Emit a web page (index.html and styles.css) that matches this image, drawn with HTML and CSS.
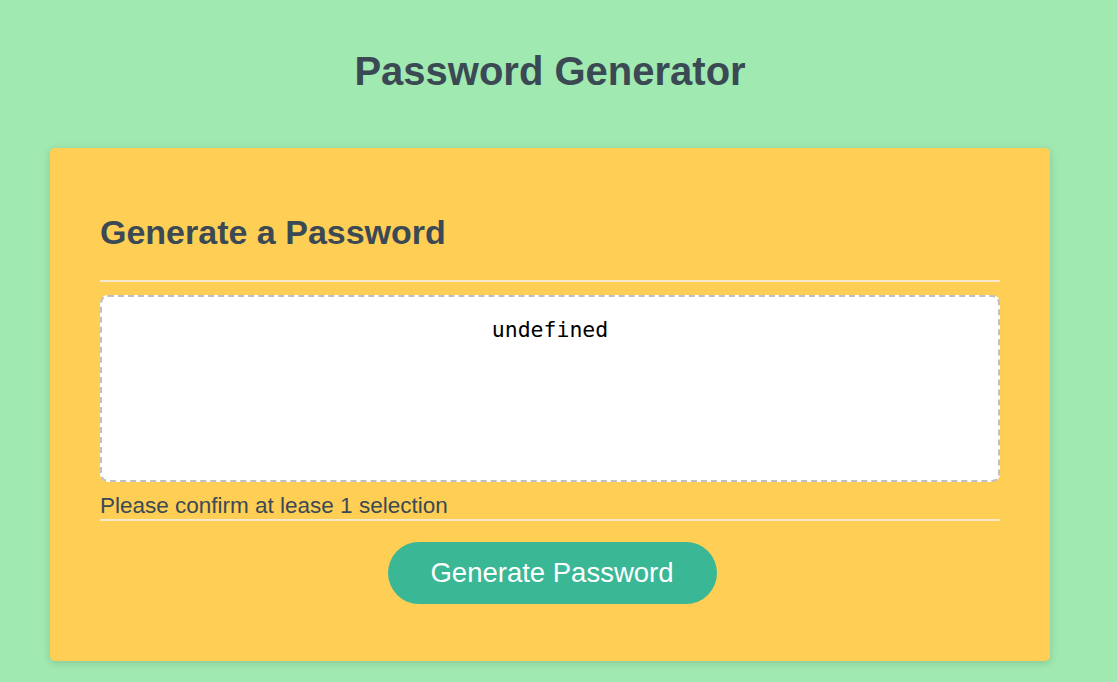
FILE: index.html
```html
<!DOCTYPE html>
<html lang="en">
<head>
<meta charset="utf-8">
<title>Password Generator</title>
<link rel="stylesheet" href="styles.css">
</head>
<body>
<div class="wrapper">
  <header>
    <h1>Password Generator</h1>
  </header>
  <div class="card">
    <div class="card-header">
      <h2>Generate a Password</h2>
    </div>
    <div class="card-body">
      <textarea readonly id="password" class="password" aria-label="Generated Password">undefined</textarea>
      <p class="hint">Please confirm at lease 1 selection</p>
    </div>
    <div class="card-footer">
      <button id="generate" class="btn">Generate Password</button>
    </div>
  </div>
</div>
</body>
</html>
```

FILE: styles.css
```css
* { box-sizing: border-box; }
html, body { margin: 0; padding: 0; }
body {
  font-family: "Liberation Sans", Arial, sans-serif;
  background-color: #a0e9b0;
  height: 682px;
  overflow: hidden;
}
.wrapper {
  width: 1100px;
  padding: 50px 50px 0 50px;
}
header {
  text-align: center;
  color: #3b4954;
}
h1 {
  margin: 0 0 55px 0;
  font-size: 40px;
  line-height: 43px;
  font-weight: bold;
}
.card {
  background-color: #ffcf55;
  border-radius: 5px;
  box-shadow: rgba(0, 0, 0, 0.15) 0 2px 8px 0;
  color: #3b4954;
  padding: 65px 50px 57px 50px;
  height: 513px;
}
.card-header::after {
  content: "";
  display: block;
  height: 2px;
  background: #f6e8cb;
}
h2 {
  margin: 0 0 29px 0;
  font-size: 34px;
  line-height: 38px;
  font-weight: bold;
}
.card-body {
  padding-top: 13px;
}
.password {
  display: block;
  width: 100%;
  height: 187px;
  margin: 0;
  padding: 20px 14px;
  border: 2px dashed #c0c0c0;
  border-radius: 8px;
  background: #fff;
  resize: none;
  overflow: hidden;
  text-align: center;
  font-family: "DejaVu Sans Mono", monospace;
  font-size: 21.5px;
  line-height: 26px;
  color: #000;
}
.hint {
  margin: 12px 0 0 0;
  font-size: 22.5px;
  line-height: 23px;
  color: #3b4954;
}
.card-footer {
  text-align: center;
}
.card-footer::before {
  content: "";
  display: block;
  height: 2px;
  margin-top: 2px;
  background: #f6e8cb;
}
.btn {
  margin: 21px 0 0 4px;
  border: none;
  background-color: #3ab795;
  color: #fff;
  border-radius: 31px;
  height: 62px;
  width: 329px;
  font-family: "Liberation Sans", Arial, sans-serif;
  font-size: 27.5px;
  cursor: pointer;
}
```
